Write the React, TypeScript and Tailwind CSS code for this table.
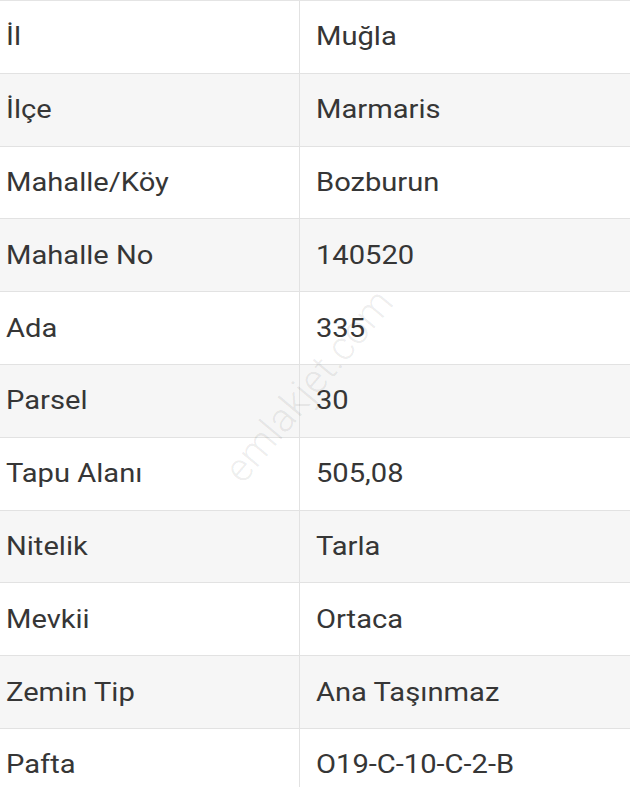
import React from "react";

const rows: [string, string][] = [
  ["İl", "Muğla"],
  ["İlçe", "Marmaris"],
  ["Mahalle/Köy", "Bozburun"],
  ["Mahalle No", "140520"],
  ["Ada", "335"],
  ["Parsel", "30"],
  ["Tapu Alanı", "505,08"],
  ["Nitelik", "Tarla"],
  ["Mevkii", "Ortaca"],
  ["Zemin Tip", "Ana Taşınmaz"],
  ["Pafta", "O19-C-10-C-2-B"],
];

export default function App() {
  return (
    <div
      className="relative w-[630px] h-[787px] overflow-hidden bg-white text-[#363636]"
      style={{ fontFamily: "Roboto, 'Liberation Sans', sans-serif" }}
    >
      <div className="border-t-[1.5px] border-[#e4e4e4]">
        {rows.map(([k, v], i) => (
          <div
            key={k}
            className={`flex h-[72.8px] border-b border-[#e2e2e2] ${
              i % 2 === 1 ? "bg-[#f6f6f6]" : "bg-white"
            }`}
          >
            <div className="w-[300px] shrink-0 flex items-center pl-[6px] border-r border-[#e2e2e2] text-[26px]">
              <span className="inline-block origin-left scale-x-[1.12] whitespace-nowrap">{k}</span>
            </div>
            <div className="flex-1 flex items-center pl-[16px] text-[26px]">
              <span className="inline-block origin-left scale-x-[1.12] whitespace-nowrap">{v}</span>
            </div>
          </div>
        ))}
      </div>
      <div className="pointer-events-none absolute left-[309px] top-[386px] -translate-x-1/2 -translate-y-1/2 -rotate-[50deg] whitespace-nowrap text-[40px] font-light text-[#000000]/[0.08]">
        emlakjet.com
      </div>
    </div>
  );
}
